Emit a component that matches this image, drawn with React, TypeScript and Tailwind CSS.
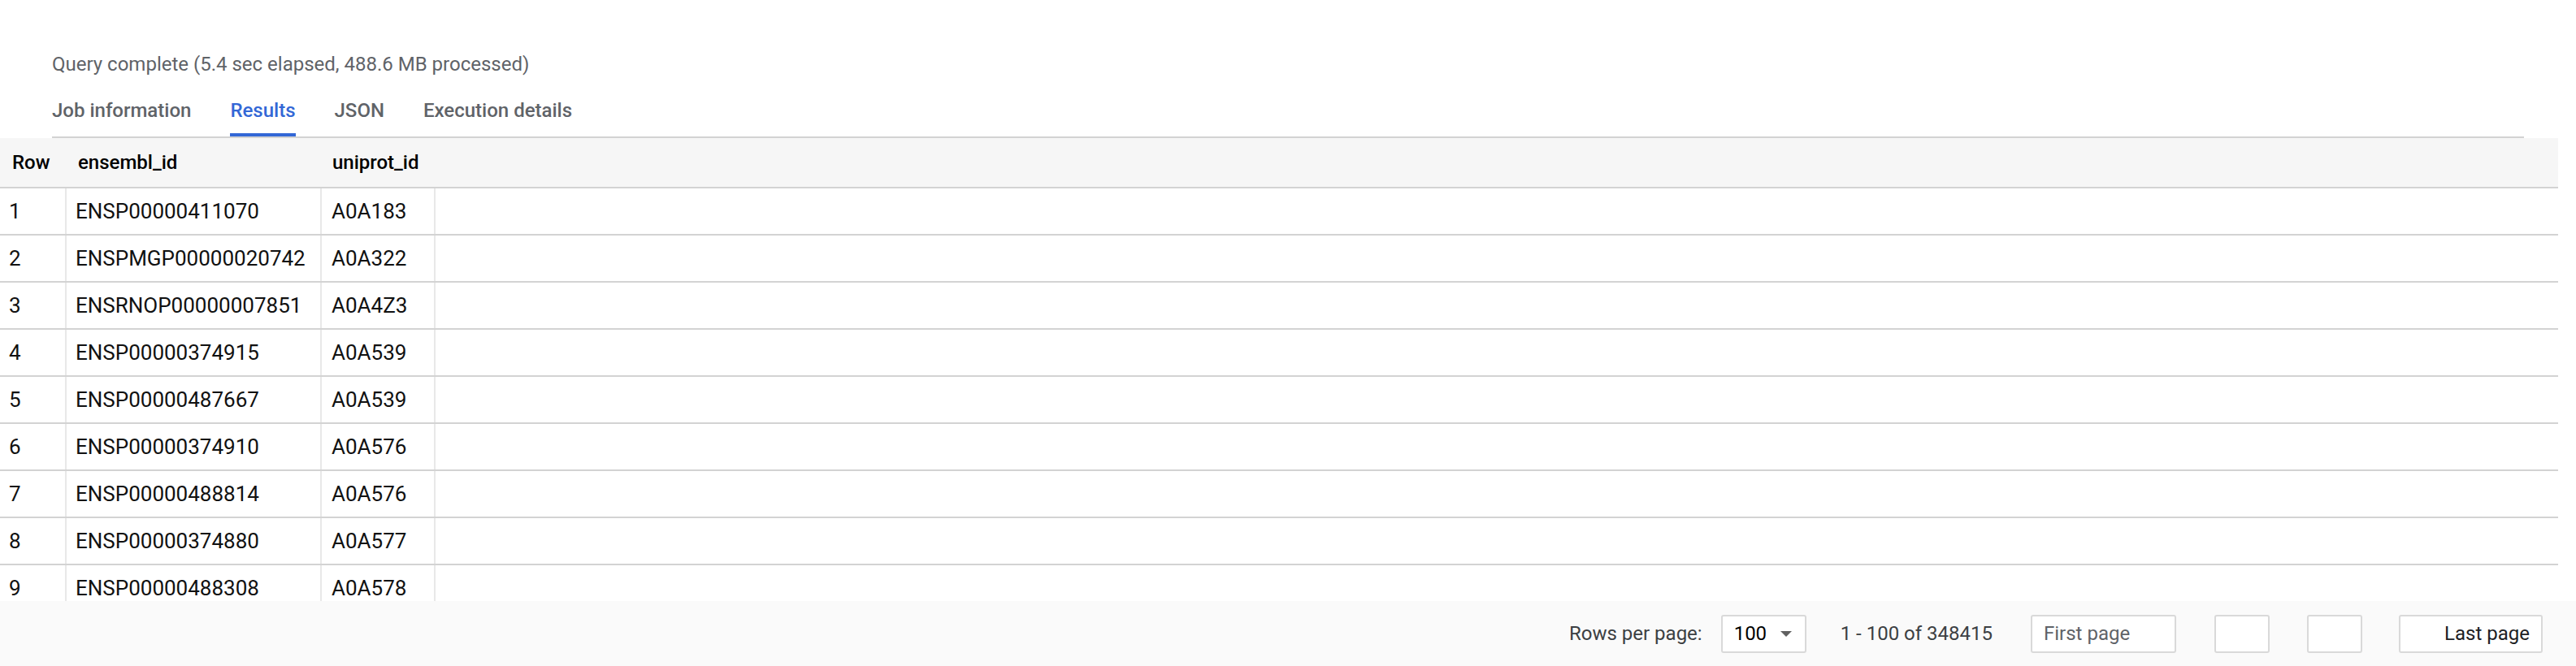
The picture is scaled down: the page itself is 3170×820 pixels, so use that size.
const rows = [
  ["1", "ENSP00000411070", "A0A183"],
  ["2", "ENSPMGP00000020742", "A0A322"],
  ["3", "ENSRNOP00000007851", "A0A4Z3"],
  ["4", "ENSP00000374915", "A0A539"],
  ["5", "ENSP00000487667", "A0A539"],
  ["6", "ENSP00000374910", "A0A576"],
  ["7", "ENSP00000488814", "A0A576"],
  ["8", "ENSP00000374880", "A0A577"],
  ["9", "ENSP00000488308", "A0A578"],
];

const tabs = ["Job information", "Results", "JSON", "Execution details"];

export default function App() {
  return (
    <div className="flex h-[820px] w-[3170px] flex-col overflow-hidden bg-white font-['Roboto',sans-serif]">
      <div className="px-[64px] pt-[63px]">
        <p className="text-[24px] leading-[32px] text-[#5f6368]">
          Query complete (5.4 sec elapsed, 488.6 MB processed)
        </p>
      </div>

      <div className="mx-[64px] mt-[25px] flex gap-[48px] border-b-2 border-[#d3d3d3]">
        {tabs.map((tab) =>
          tab === "Results" ? (
            <div key={tab} className="border-b-4 border-[#3367d6] pb-[12px] text-[24px] font-medium leading-[32px] text-[#3367d6]">
              {tab}
            </div>
          ) : (
            <div key={tab} className="pb-[16px] text-[24px] font-medium leading-[32px] text-[#5f6368]">
              {tab}
            </div>
          )
        )}
      </div>

      <div className="mr-[22px] flex-1 overflow-hidden">
        <div className="flex h-[62px] items-center border-b-2 border-[#d3d3d3] bg-[#f6f6f6] text-[24px] font-medium text-black">
          <div className="w-[82px] pl-[15px]">Row</div>
          <div className="w-[314px] pl-[14px]">ensembl_id</div>
          <div className="w-[140px] pl-[13px]">uniprot_id</div>
        </div>
        {rows.map(([n, ensembl, uniprot]) => (
          <div key={n} className="flex h-[58px] border-b-2 border-[#d3d3d3] text-[26px] text-[#111]">
            <div className="flex w-[82px] items-center border-r-2 border-[#e8e8e8] pl-[11px]">{n}</div>
            <div className="flex w-[314px] items-center border-r-2 border-[#e8e8e8] pl-[11px]">{ensembl}</div>
            <div className="flex w-[140px] items-center border-r-2 border-[#e8e8e8] pl-[12px]">{uniprot}</div>
            <div className="flex-1" />
          </div>
        ))}
      </div>

      <div className="flex h-[80px] shrink-0 items-center justify-end bg-[#fafafa] pr-[41px] text-[24px]">
        <span className="text-[#3c4043]">Rows per page:</span>
        <div className="ml-[23px] flex h-[47px] w-[105px] items-center justify-between rounded-[3px] border-2 border-[#d9d9d9] bg-white pl-[14px] pr-[16px] text-black">
          <span>100</span>
          <svg width="14" height="7" viewBox="0 0 14 7">
            <path d="M0 0h14L7 7z" fill="#616161" />
          </svg>
        </div>
        <span className="ml-[42px] text-[#3c4043]">1 - 100 of 348415</span>
        <div className="ml-[47px] flex h-[47px] w-[179px] items-center rounded-[3px] border-2 border-[#d9d9d9] bg-white pl-[14px] text-[#5f6368]">
          First page
        </div>
        <div className="ml-[47px] h-[47px] w-[68px] rounded-[3px] border-2 border-[#d9d9d9] bg-white" />
        <div className="ml-[46px] h-[47px] w-[68px] rounded-[3px] border-2 border-[#d9d9d9] bg-white" />
        <div className="ml-[45px] flex h-[47px] w-[177px] items-center justify-end rounded-[3px] border-2 border-[#d9d9d9] bg-white pr-[14px] text-[#202124]">
          Last page
        </div>
      </div>
    </div>
  );
}
